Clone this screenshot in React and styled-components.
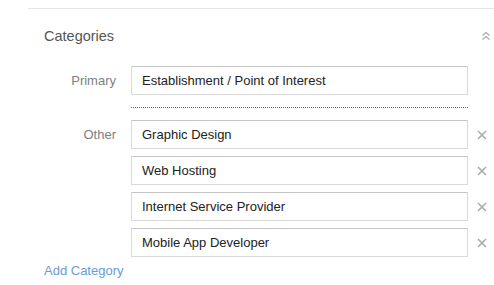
import React from 'react';
import styled, { createGlobalStyle } from 'styled-components';

const GlobalStyle = createGlobalStyle`
  body {
    margin: 0;
    background: #ffffff;
    font-family: "Liberation Sans", Arial, sans-serif;
  }
`;

const Page = styled.div`
  padding: 8px 0 0 28px;
`;

const Section = styled.section`
  border-top: 1px solid #e5e5e5;
`;

const Header = styled.div`
  display: flex;
  justify-content: space-between;
  align-items: center;
  padding: 18px 4px 0 16px;
  height: 18px;
`;

const Title = styled.h2`
  margin: 0;
  font-size: 14.5px;
  font-weight: normal;
  line-height: 18px;
  color: #555;
`;

const Collapse = styled.button`
  border: none;
  background: none;
  padding: 0;
  width: 8px;
  height: 10px;
  display: flex;
  cursor: pointer;
`;

const Form = styled.div`
  padding: 21px 0 0 16px;
`;

const Row = styled.div`
  display: grid;
  grid-template-columns: 72px 337px 18px;
  column-gap: 15px;
  align-items: center;
  margin-bottom: ${(p) => (p.$last ? '0' : '7px')};
`;

const Label = styled.span`
  text-align: right;
  font-size: 13px;
  color: #808080;
`;

const Field = styled.input`
  box-sizing: border-box;
  width: 337px;
  height: 29px;
  margin: 0;
  padding: 0 10px;
  border: 1px solid #d9d9d9;
  border-top-color: #c4c4c4;
  border-radius: 0;
  font-family: "Liberation Sans", Arial, sans-serif;
  font-size: 13px;
  color: #222;
  outline: none;
`;

const Divider = styled.div`
  margin: 12px 0 12px 87px;
  width: 337px;
  border-top: 1px dotted #666;
`;

const Remove = styled.button`
  border: none;
  background: none;
  padding: 0;
  margin-left: -6px;
  width: 10px;
  height: 10px;
  display: flex;
  cursor: pointer;
`;

const AddLink = styled.a`
  display: block;
  margin-top: 6px;
  font-size: 13px;
  line-height: 16px;
  color: #6b9ad6;
  text-decoration: none;
`;

const others = [
  'Graphic Design',
  'Web Hosting',
  'Internet Service Provider',
  'Mobile App Developer',
];

const CloseIcon = () => (
  <svg width="10" height="10" viewBox="0 0 10 10">
    <path d="M1 1 L9 9 M9 1 L1 9" stroke="#aaa" strokeWidth="1.6" fill="none" />
  </svg>
);

const ChevronsUp = () => (
  <svg width="8" height="10" viewBox="0 0 8 10">
    <path d="M0.5 4.5 L4 1.5 L7.5 4.5 M0.5 8.5 L4 5.5 L7.5 8.5" stroke="#aaa" strokeWidth="1.3" fill="none" />
  </svg>
);

const App = () => {
  return (
    <>
      <GlobalStyle />
      <Page>
        <Section>
          <Header>
            <Title>Categories</Title>
            <Collapse type="button">
              <ChevronsUp />
            </Collapse>
          </Header>
          <Form>
            <Row $last>
              <Label>Primary</Label>
              <Field readOnly defaultValue="Establishment / Point of Interest" />
            </Row>
            <Divider />
            {others.map((name, i) => (
              <Row key={name} $last={i === others.length - 1}>
                <Label>{i === 0 ? 'Other' : ''}</Label>
                <Field readOnly defaultValue={name} />
                <Remove type="button">
                  <CloseIcon />
                </Remove>
              </Row>
            ))}
            <AddLink href="#">Add Category</AddLink>
          </Form>
        </Section>
      </Page>
    </>
  );
};

export default App;
